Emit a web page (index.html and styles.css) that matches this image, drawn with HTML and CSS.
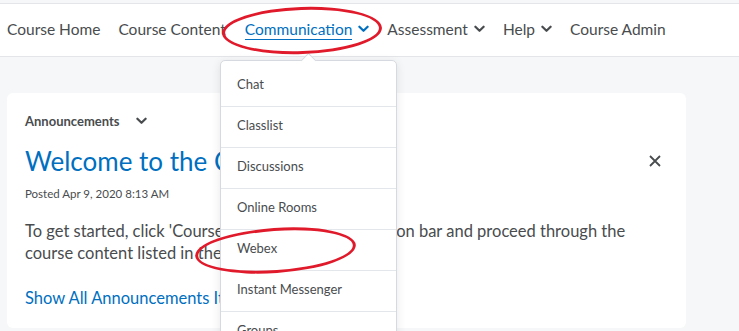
FILE: index.html
```html
<!DOCTYPE html>
<html lang="en">
<head>
    <meta charset="UTF-8">
    <title>Course Home</title>
    <link rel="stylesheet" href="styles.css">
</head>
<body>

    <div class="navbar">
        <div class="nav-item">Course Home</div>
        <div class="nav-item">Course Content</div>
        <div class="nav-item active">
            <span class="nav-label">Communication</span>
            <svg class="chev" viewBox="0 0 12 8" width="11" height="8"><path d="M1.5 1.5 L6 6 L10.5 1.5" /></svg>
        </div>
        <div class="nav-item">
            <span class="nav-label">Assessment</span>
            <svg class="chev" viewBox="0 0 12 8" width="11" height="8"><path d="M1.5 1.5 L6 6 L10.5 1.5" /></svg>
        </div>
        <div class="nav-item">
            <span class="nav-label">Help</span>
            <svg class="chev" viewBox="0 0 12 8" width="11" height="8"><path d="M1.5 1.5 L6 6 L10.5 1.5" /></svg>
        </div>
        <div class="nav-item">Course Admin</div>
    </div>

    <div class="page">
        <div class="card">
            <div class="card-head">
                <span>Announcements</span>
                <svg class="chev" viewBox="0 0 12 8" width="11" height="8"><path d="M1.5 1.5 L6 6 L10.5 1.5" /></svg>
            </div>
            <div class="title-row">
                <h2>Welcome to the Course</h2>
                <svg class="close" viewBox="0 0 12 12" width="12" height="12"><path d="M1 1 L11 11 M11 1 L1 11" /></svg>
            </div>
            <div class="posted">Posted Apr 9, 2020 8:13 AM</div>
            <p class="body-text">To get started, click 'Course Content' in the navigation bar and proceed through the course content listed in the Table of Contents.</p>
            <a class="show-all" href="#">Show All Announcements Items</a>
        </div>
    </div>

    <!-- Communication dropdown -->
    <div class="dropdown">
        <div class="pointer"></div>
        <div class="menu-item">Chat</div>
        <div class="menu-item">Classlist</div>
        <div class="menu-item">Discussions</div>
        <div class="menu-item">Online Rooms</div>
        <div class="menu-item">Webex</div>
        <div class="menu-item">Instant Messenger</div>
        <div class="menu-item">Groups</div>
    </div>

    <!-- red annotation circles -->
    <div class="mark mark-nav"></div>
    <div class="mark mark-webex"></div>

</body>
</html>
```

FILE: styles.css
```css
body {
    margin: 0;
    font-family: Lato, "Noto Sans", sans-serif;
    color: #494c4e;
    background: #f6f7f8;
    height: 331px;
    overflow: hidden;
    position: relative;
}

.navbar {
    background: #ffffff;
    border-top: 1px solid #e3e5e8;
    border-bottom: 1px solid #e3e5e8;
    margin-top: 3px;
    height: 52px;
    display: flex;
    align-items: center;
    padding-left: 7px;
    gap: 18px;
    font-size: 15.5px;
}

.nav-item {
    display: flex;
    align-items: center;
    gap: 6px;
    white-space: nowrap;
    margin-top: -2px;
}

.nav-item.active {
    color: #006fbf;
    margin-left: 1px;
}

.nav-item.active .nav-label {
    border-bottom: 1px solid #006fbf;
    padding-bottom: 1px;
    margin-top: 2px;
}

.chev {
    fill: none;
    stroke: #494c4e;
    stroke-width: 2.4;
    stroke-linecap: round;
    stroke-linejoin: round;
}

.nav-item.active .chev {
    stroke: #006fbf;
}

.page {
    padding: 36px 53px 0 7px;
}

.card {
    background: #ffffff;
    border-radius: 6px;
    height: 235px;
    padding: 19px 18px 0 18px;
    box-sizing: border-box;
}

.card-head {
    display: flex;
    align-items: center;
    gap: 16px;
    font-size: 13px;
    font-weight: bold;
    height: 18px;
}

.title-row {
    display: flex;
    justify-content: space-between;
    align-items: center;
    margin-top: 9px;
}

.title-row h2 {
    margin: 0;
    font-size: 26px;
    font-weight: normal;
    color: #006fbf;
    line-height: 44px;
}

.close {
    fill: none;
    stroke: #494c4e;
    stroke-width: 1.8;
    margin-right: 7px;
}

.posted {
    font-size: 11.5px;
    margin-top: 4px;
}

.body-text {
    font-size: 16.5px;
    line-height: 22px;
    margin: 20px 14px 0 0;
}

.show-all {
    display: block;
    margin-top: 24px;
    font-size: 16.5px;
    color: #006fbf;
    text-decoration: none;
}

.dropdown {
    position: absolute;
    left: 220px;
    top: 60px;
    width: 177px;
    height: 300px;
    background: #ffffff;
    border: 1px solid #d6dae0;
    border-radius: 5px;
    box-shadow: 0 2px 10px rgba(0, 0, 0, 0.1);
    padding-top: 5px;
    box-sizing: border-box;
}

.pointer {
    position: absolute;
    left: 82px;
    top: -6px;
    width: 10px;
    height: 10px;
    background: #ffffff;
    border-left: 1px solid #d6dae0;
    border-top: 1px solid #d6dae0;
    transform: rotate(45deg);
}

.menu-item {
    height: 41px;
    line-height: 37px;
    padding-left: 16px;
    font-size: 13px;
    border-bottom: 1px solid #e3e6ea;
    box-sizing: border-box;
}

.mark {
    position: absolute;
    border: 3px solid #e01a2b;
    border-radius: 50%;
    box-sizing: border-box;
}

.mark-nav {
    left: 222px;
    top: 7px;
    width: 160px;
    height: 47px;
    transform: rotate(-2deg);
}

.mark-webex {
    left: 195px;
    top: 228px;
    width: 161px;
    height: 45px;
    transform: rotate(-4deg);
}
```
